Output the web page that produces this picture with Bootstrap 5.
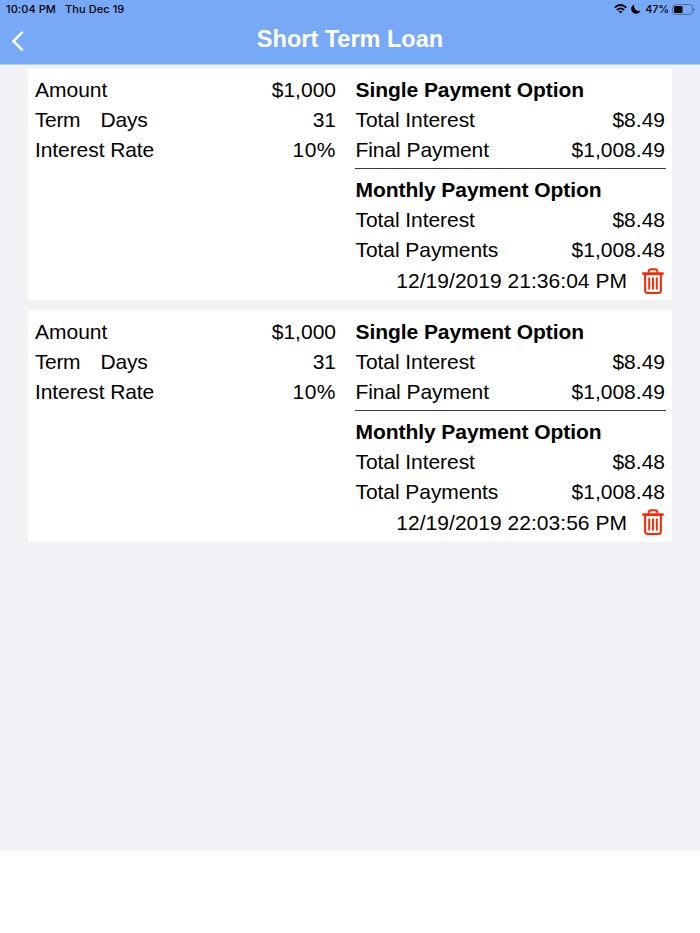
<!DOCTYPE html>
<html lang="en">
<head>
<meta charset="utf-8">
<meta name="viewport" content="width=device-width, initial-scale=1">
<title>Short Term Loan</title>
<link href="https://cdn.jsdelivr.net/npm/bootstrap@5.3.0/dist/css/bootstrap.min.css" rel="stylesheet">
<style>
body { font-family: "Liberation Sans", Arial, sans-serif; font-size: 21px; line-height: 30px; color: #000; background: #fff; }
.app-header { height: 65px; background: #78a9f7; border-bottom: 1px solid #bccbe8; }
.status-bar { height: 18px; padding: 0 5px 0 6px; font-family: Inter, "Liberation Sans", sans-serif; font-size: 11px; font-weight: 500; line-height: 18px; letter-spacing: .08px; }
.status-date { margin-left: 9px; }
.status-icons { gap: 4px; }
.percent { letter-spacing: -.2px; }
.battery { margin-left: -2px; }
.nav-row { height: 46px; padding: 1px 12px 0; }
.back-cell { width: 40px; }
.page-title { font-size: 23.5px; line-height: 41px; color: #fff; }
.loan-list { height: 785.5px; padding: 4px 28px 0; background: #f2f1f6; gap: 10px; }
.loan { height: 231.3px; padding: 6.25px 7px 0; }
.terms { width: 301px; }
.term-label { letter-spacing: -.4px; }
.rate-label { letter-spacing: -.08px; }
.rate-value { letter-spacing: .5px; }
.options { width: 310px; }
.gap-unit { margin-left: 20.4px; letter-spacing: -.2px; }
.option-title { height: 26px; line-height: 30px; overflow: hidden; margin-bottom: 4px; letter-spacing: -.06px; padding-left: .5px; }
.pay-label { padding-left: .5px; letter-spacing: -.06px; }
.rule { height: 1px; background: #3a3a3a; margin: 3px -1px 6.15px .4px; }
.stamp { height: 32px; gap: 15px; padding-right: 1px; letter-spacing: .03px; }
.trash { margin-top: -1px; }
</style>
<script src="https://cdn.jsdelivr.net/npm/bootstrap@5.3.0/dist/js/bootstrap.bundle.min.js"></script>
</head>
<body>
<svg width="0" height="0" class="d-none" aria-hidden="true">
  <symbol id="trash" viewBox="0 0 22 26">
    <g fill="none" stroke="#ff2600">
      <path d="M6.600 4.800V3.700Q6.600 1.200 9 1.200h4q2.400 0 2.400 2.500v1.100" stroke-width="1.900"/>
      <path d="M1.500 5.600h19" stroke-width="2.800" stroke-linecap="round"/>
      <path d="M3.100 6.500v15.800Q3.100 25 5.700 25h10.600q2.600 0 2.600-2.700V6.500" stroke-width="2"/>
      <path d="M7.200 9.500v12M11 9.500v12M14.800 9.500v12" stroke-width="1.900"/>
    </g>
  </symbol>
</svg>

<header class="app-header">
  <div class="status-bar d-flex justify-content-between">
    <div class="d-flex"><span>10:04 PM</span><span class="status-date">Thu Dec 19</span></div>
    <div class="status-icons d-flex align-items-center">
      <svg width="13" height="10" viewBox="0 0 13 10"><g fill="none" stroke="#000" stroke-width="1.800"><path d="M.7 3.700Q6.500-1.600 12.300 3.700"/><path d="M2.900 6Q6.500 2.700 10.100 6"/></g><path d="M4.500 7.500Q6.500 5.800 8.500 7.500L6.500 9.600z"/></svg>
      <svg width="10" height="10" viewBox="0 0 10 10"><path d="M3.200.4C1.300 1.200.2 2.900.2 5c0 2.700 2.100 4.700 4.800 4.700 2 0 3.700-1 4.500-2.900C5.800 7.600 2.400 4.900 3.200.4z"/></svg>
      <span class="percent">47%</span>
      <svg class="battery" width="24" height="11" viewBox="0 0 24 11"><rect x="1.500" y=".5" width="20" height="10" rx="3" fill="none" stroke="#526f9c"/><rect x="3" y="2" width="8.500" height="7" rx="1"/><path d="M22.500 3.700q1.300.5 1.300 1.800t-1.300 1.800z" fill="#526f9c"/></svg>
    </div>
  </div>
  <div class="nav-row d-flex justify-content-between">
    <div class="back-cell pt-1"><svg width="13" height="20" viewBox="0 0 13 20" class="d-block mt-2"><path d="M9.900 1.600L1.500 10.100l8.400 8.500" fill="none" stroke="#fff" stroke-width="2.600" stroke-linecap="round"/></svg></div>
    <h1 class="page-title fw-bold m-0">Short Term Loan</h1>
    <div class="back-cell"></div>
  </div>
</header>

<main class="loan-list d-flex flex-column">
  <section class="loan bg-white d-flex justify-content-between">
    <div class="terms">
      <div class="d-flex justify-content-between"><span>Amount</span><span>$1,000</span></div>
      <div class="d-flex"><span class="term-label">Term</span><span class="gap-unit">Days</span><span class="ms-auto">31</span></div>
      <div class="d-flex justify-content-between"><span class="rate-label">Interest Rate</span><span class="rate-value">10%</span></div>
    </div>
    <div class="options">
      <div class="option-title fw-bold">Single Payment Option</div>
      <div class="d-flex justify-content-between"><span class="pay-label">Total Interest</span><span>$8.49</span></div>
      <div class="d-flex justify-content-between"><span class="pay-label">Final Payment</span><span>$1,008.49</span></div>
      <div class="rule"></div>
      <div class="option-title fw-bold">Monthly Payment Option</div>
      <div class="d-flex justify-content-between"><span class="pay-label">Total Interest</span><span>$8.48</span></div>
      <div class="d-flex justify-content-between"><span class="pay-label">Total Payments</span><span>$1,008.48</span></div>
      <div class="stamp d-flex justify-content-end align-items-center"><span>12/19/2019 21:36:04 PM</span><svg class="trash" width="22" height="26"><use href="#trash"/></svg></div>
    </div>
  </section>
  <section class="loan bg-white d-flex justify-content-between">
    <div class="terms">
      <div class="d-flex justify-content-between"><span>Amount</span><span>$1,000</span></div>
      <div class="d-flex"><span class="term-label">Term</span><span class="gap-unit">Days</span><span class="ms-auto">31</span></div>
      <div class="d-flex justify-content-between"><span class="rate-label">Interest Rate</span><span class="rate-value">10%</span></div>
    </div>
    <div class="options">
      <div class="option-title fw-bold">Single Payment Option</div>
      <div class="d-flex justify-content-between"><span class="pay-label">Total Interest</span><span>$8.49</span></div>
      <div class="d-flex justify-content-between"><span class="pay-label">Final Payment</span><span>$1,008.49</span></div>
      <div class="rule"></div>
      <div class="option-title fw-bold">Monthly Payment Option</div>
      <div class="d-flex justify-content-between"><span class="pay-label">Total Interest</span><span>$8.48</span></div>
      <div class="d-flex justify-content-between"><span class="pay-label">Total Payments</span><span>$1,008.48</span></div>
      <div class="stamp d-flex justify-content-end align-items-center"><span>12/19/2019 22:03:56 PM</span><svg class="trash" width="22" height="26"><use href="#trash"/></svg></div>
    </div>
  </section>
</main>
</body>
</html>
